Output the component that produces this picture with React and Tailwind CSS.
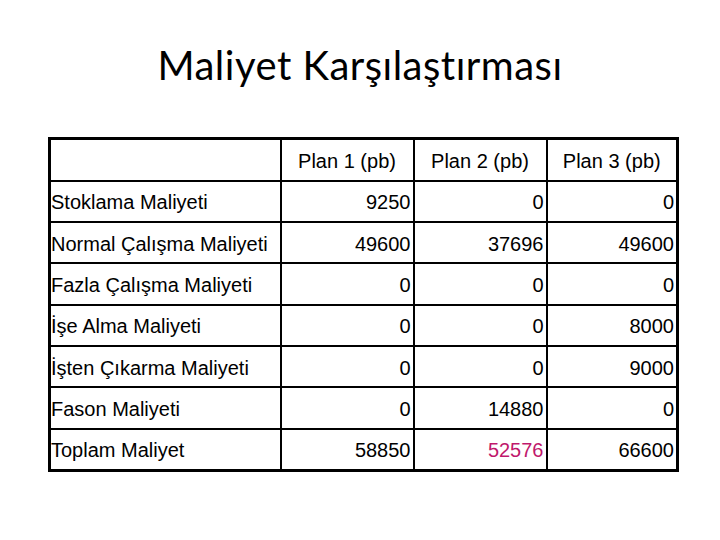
import React from 'react';

const ROWS = [
  { label: 'Stoklama Maliyeti', values: ['9250', '0', '0'] },
  { label: 'Normal Çalışma Maliyeti', values: ['49600', '37696', '49600'] },
  { label: 'Fazla Çalışma Maliyeti', values: ['0', '0', '0'] },
  { label: 'İşe Alma Maliyeti', values: ['0', '0', '8000'] },
  { label: 'İşten Çıkarma Maliyeti', values: ['0', '0', '9000'] },
  { label: 'Fason Maliyeti', values: ['0', '14880', '0'] },
  { label: 'Toplam Maliyet', values: ['58850', '52576', '66600'], highlight: 1 },
];

const PLANS = ['Plan 1 (pb)', 'Plan 2 (pb)', 'Plan 3 (pb)'];

export default function App() {
  return (
    <div className="w-[720px] h-[540px] bg-white text-black overflow-hidden">
      <h1
        className="pt-[39px] text-center text-[40px] leading-[52px] tracking-[0.5px]"
        style={{ fontFamily: 'Lato, "Open Sans", sans-serif' }}
      >
        Maliyet Karşılaştırması
      </h1>

      <table
        className="ml-[48px] mt-[46px] border-collapse border-[3px] border-black text-[20px] leading-none"
        style={{ fontFamily: '"Liberation Sans", Arial, sans-serif' }}
      >
        <colgroup>
          <col className="w-[231px]" />
          <col className="w-[133px]" />
          <col className="w-[133px]" />
          <col className="w-[131px]" />
        </colgroup>
        <thead>
          <tr className="h-[42px]">
            <th className="border-2 border-black" />
            {PLANS.map((p) => (
              <th key={p} className="border-2 border-black font-normal text-center align-middle pt-[2px]">
                {p}
              </th>
            ))}
          </tr>
        </thead>
        <tbody>
          {ROWS.map((row) => (
            <tr key={row.label} className="h-[41.4px]">
              <td className="border-2 border-black pl-0 align-middle whitespace-nowrap pt-[2px]">{row.label}</td>
              {row.values.map((v, i) => (
                <td
                  key={i}
                  className={`border-2 border-black text-right pr-[2px] align-middle pt-[2px] ${
                    row.highlight === i ? 'text-[#c0186c]' : ''
                  }`}
                >
                  {v}
                </td>
              ))}
            </tr>
          ))}
        </tbody>
      </table>
    </div>
  );
}
